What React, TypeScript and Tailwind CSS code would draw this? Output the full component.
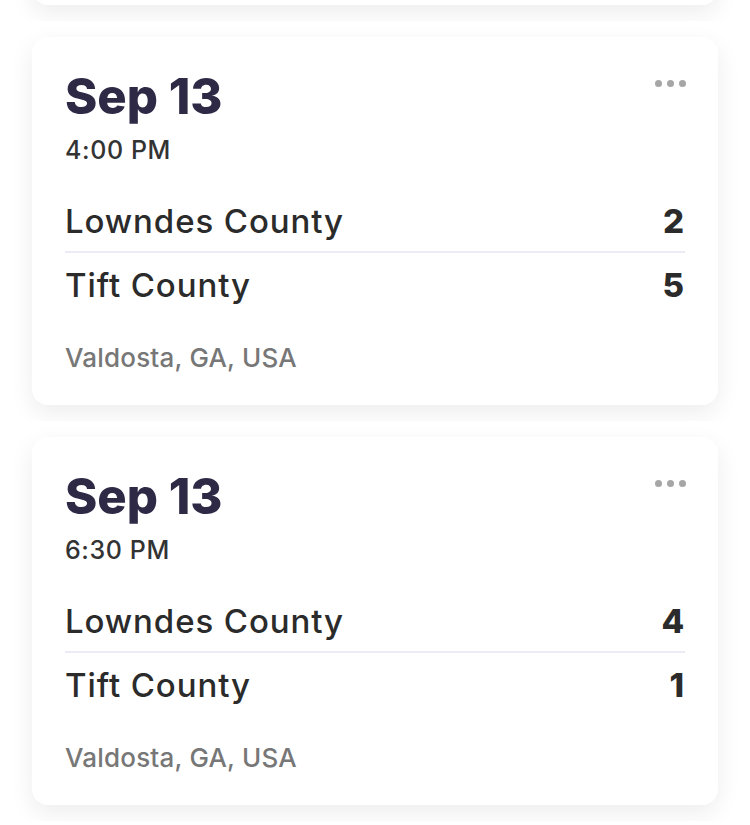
import React from "react";

type Game = { date: string; time: string; home: string; homeScore: number; away: string; awayScore: number; place: string };

const games: Game[] = [
  { date: "Sep 13", time: "4:00 PM", home: "Lowndes County", homeScore: 2, away: "Tift County", awayScore: 5, place: "Valdosta, GA, USA" },
  { date: "Sep 13", time: "6:30 PM", home: "Lowndes County", homeScore: 4, away: "Tift County", awayScore: 1, place: "Valdosta, GA, USA" },
];

function Cell({ children }: { children?: React.ReactNode }) {
  return (
    <div className="h-[400px] overflow-hidden px-[32px] py-[16px]">
      <div className="h-[368px] rounded-[16px] bg-white shadow-[0_8px_24px_rgba(0,0,0,0.075)] px-[33px] pt-[36px]">
        {children}
      </div>
    </div>
  );
}

function Card({ g }: { g: Game }) {
  return (
    <Cell>
      <div className="flex items-start justify-between">
        <div className="text-[49px] leading-[48px] font-extrabold text-[#2e2a46]">{g.date}</div>
        <div className="flex gap-[5px] mt-[7px] mr-[-1px]">
          <span className="w-[7px] h-[7px] rounded-full bg-[#a6a6a6]" />
          <span className="w-[7px] h-[7px] rounded-full bg-[#a6a6a6]" />
          <span className="w-[7px] h-[7px] rounded-full bg-[#a6a6a6]" />
        </div>
      </div>
      <div className="mt-[14px] text-[25px] leading-[30px] font-medium tracking-[0.6px] text-[#333]">{g.time}</div>
      <div className="mt-[36px] flex justify-between text-[33px] leading-[40px] font-medium tracking-[0.9px] text-[#2b2b2b]">
        <span>{g.home}</span>
        <span className="font-extrabold">{g.homeScore}</span>
      </div>
      <div className="mt-[10px] h-[2px] bg-[#eceaf5]" />
      <div className="mt-[12px] flex justify-between text-[33px] leading-[40px] font-medium tracking-[0.9px] text-[#2b2b2b]">
        <span>{g.away}</span>
        <span className="font-extrabold">{g.awayScore}</span>
      </div>
      <div className="mt-[37px] text-[26px] leading-[32px] font-medium tracking-[0.2px] text-[#777]">{g.place}</div>
    </Cell>
  );
}

export default function App() {
  return (
    <div className="w-[750px] h-[825px] overflow-hidden bg-white" style={{ fontFamily: "Inter, 'Noto Sans', sans-serif" }}>
      <div className="mt-[-379px]">
        <Cell />
        {games.map((g, i) => (
          <Card key={i} g={g} />
        ))}
      </div>
    </div>
  );
}
